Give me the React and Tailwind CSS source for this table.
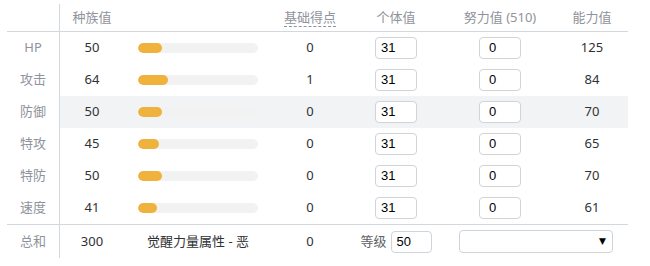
import React from "react";

const stats = [
  { label: "HP", base: 50, pt: 0, val: 125 },
  { label: "攻击", base: 64, pt: 1, val: 84 },
  { label: "防御", base: 50, pt: 0, val: 70, hl: true },
  { label: "特攻", base: 45, pt: 0, val: 65 },
  { label: "特防", base: 50, pt: 0, val: 70 },
  { label: "速度", base: 41, pt: 0, val: 61 },
];

const GRID = "grid grid-cols-[53px_64px_148px_76px_96px_112px_72px]";

function NumInput({ value, w = "w-[42px]", pl = "pl-[5px]" }) {
  return (
    <div
      className={`${w} ${pl} h-[22px] border border-[#cfd3da] rounded-[4px] bg-white flex items-center text-[13px] text-black`}
      style={{ fontFamily: '"Liberation Sans", Arial, sans-serif' }}
    >
      {value}
    </div>
  );
}

function Row({ s }) {
  const bg = s.hl ? "bg-[#f2f3f5]" : "";
  const fill = Math.round((s.base / 255) * 120);
  return (
    <div className={`${GRID} h-8`}>
      <div className="border-r border-[#d3d7de] flex items-center justify-center text-[#8f939b]">
        {s.label}
      </div>
      <div className={`flex items-center justify-center text-[#303133] ${bg}`}>{s.base}</div>
      <div className={`flex items-center justify-center ${bg}`}>
        <div className="w-[120px] h-[10px] rounded-full bg-[#f2f2f3] overflow-hidden">
          <div className="h-full rounded-full bg-[#efb33d]" style={{ width: fill }} />
        </div>
      </div>
      <div className={`flex items-center justify-center text-[#303133] ${bg}`}>{s.pt}</div>
      <div className={`flex items-center justify-center ${bg}`}>
        <NumInput value="31" />
      </div>
      <div className={`flex items-center justify-center ${bg}`}>
        <NumInput value="0" pl="pl-[9px]" />
      </div>
      <div className={`flex items-center justify-center text-[#303133] ${bg}`}>{s.val}</div>
    </div>
  );
}

export default function App() {
  return (
    <div
      className="w-[650px] h-[266px] bg-white text-[13px]"
      style={{ fontFamily: '"Noto Sans", "Noto Sans CJK SC", sans-serif' }}
    >
      <div className="pt-1 pl-[7px] w-[628px]">
        <div className={`${GRID} h-[28px] border-b border-[#d3d7de] text-[#8f939b]`}>
          <div className="border-r border-[#d3d7de]" />
          <div className="flex items-center justify-center">种族值</div>
          <div />
          <div className="flex items-center justify-center">
            <span className="border-b border-dashed border-[#8f939b] leading-[17px]">基础得点</span>
          </div>
          <div className="flex items-center justify-center">个体值</div>
          <div className="flex items-center justify-center">努力值 (510)</div>
          <div className="flex items-center justify-center">能力值</div>
        </div>
        {stats.map((s) => (
          <Row key={s.label} s={s} />
        ))}
        <div className={`${GRID} h-[34px] border-t border-[#d3d7de]`}>
          <div className="border-r border-[#d3d7de] flex items-center justify-center text-[#8f939b]">
            总和
          </div>
          <div className="flex items-center justify-center text-[#303133]">300</div>
          <div className="flex items-center justify-center text-[#303133]">觉醒力量属性 - 恶</div>
          <div className="flex items-center justify-center text-[#303133]">0</div>
          <div className="flex items-center justify-center gap-[4px]">
            <span className="text-[#606266]">等级</span>
            <NumInput value="50" w="w-[41px]" />
          </div>
          <div className="col-span-2 flex items-center justify-center">
            <div className="w-[154px] h-[23px] border border-[#cfd3da] rounded-[4px] bg-white flex items-center justify-end pr-[6px]">
              <span className="text-[9px] text-black leading-none" style={{ fontFamily: '"DejaVu Sans", sans-serif' }}>▼</span>
            </div>
          </div>
        </div>
      </div>
    </div>
  );
}
